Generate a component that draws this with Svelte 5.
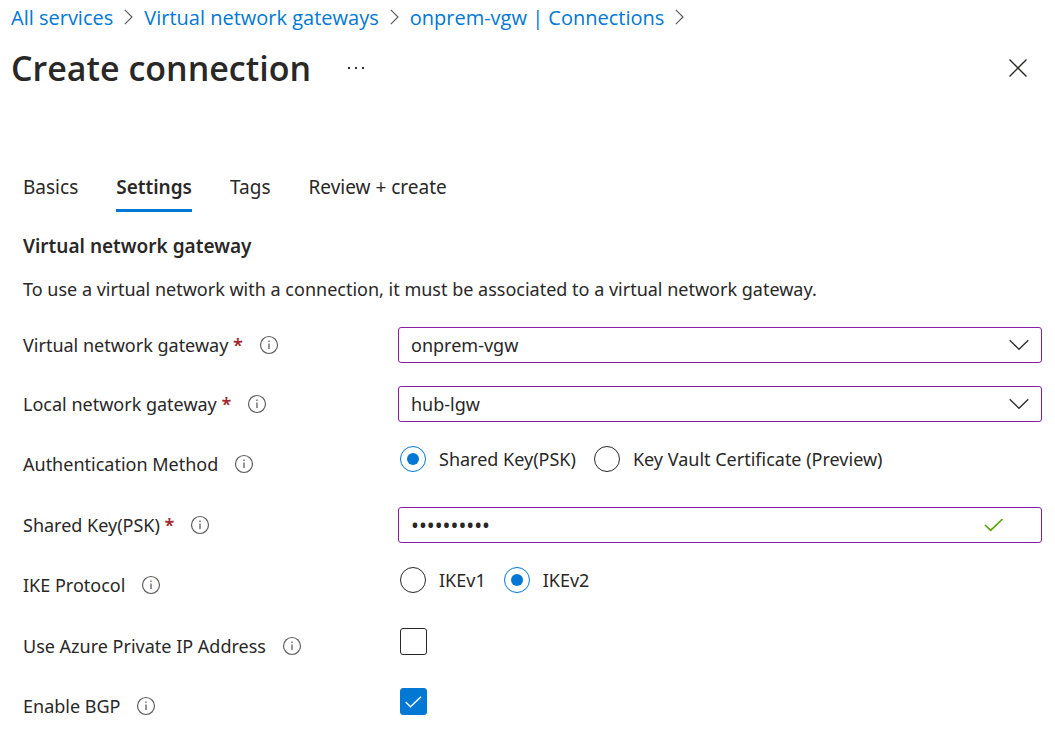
<script>
  const crumbs = ['All services', 'Virtual network gateways', 'onprem-vgw | Connections'];
  const tabs = ['Basics', 'Settings', 'Tags', 'Review + create'];
  let activeTab = $state('Settings');
  let auth = $state('psk');
  let ike = $state('v2');
  let secret = $state('sharedkey1');
  let privateIp = $state(false);
  let bgp = $state(true);
</script>

{#snippet info(topic)}
  <button class="info" type="button" aria-label={'About ' + topic}>
    <svg width="20" height="20" viewBox="0 0 20 20" fill="none" stroke="#605e5c" aria-hidden="true">
      <circle cx="10" cy="10" r="8.5" stroke-width="1.2" />
      <path d="M10 8.5V14M10 5.5V7" stroke-width="1.3" />
    </svg>
  </button>
{/snippet}

{#snippet chevron()}
  <svg class="chevron" width="20" height="12" viewBox="0 0 20 12" fill="none" stroke="#323130" stroke-width="1.4" aria-hidden="true">
    <path d="M0.7 1.2L10 10.3L19.3 1.2" />
  </svg>
{/snippet}

<main>
  <nav class="crumbs" aria-label="Breadcrumb">
    {#each crumbs as crumb}
      <a href="#top">{crumb}</a>
      <svg width="9" height="16" viewBox="0 0 9 16" fill="none" stroke="#605e5c" stroke-width="1.2" aria-hidden="true">
        <path d="M0.8 0.8L8 8L0.8 15.2" />
      </svg>
    {/each}
  </nav>

  <header>
    <h1>Create connection</h1>
    <button class="more" type="button" aria-label="More actions">
      <svg width="18" height="4" viewBox="0 0 18 4" fill="#323130" aria-hidden="true">
        <rect x="1" y="1" width="2" height="2" /><rect x="8" y="1" width="2" height="2" /><rect x="15" y="1" width="2" height="2" />
      </svg>
    </button>
    <button class="close" type="button" aria-label="Close">
      <svg width="18" height="18" viewBox="0 0 18 18" fill="none" stroke="#292827" stroke-width="1.4" aria-hidden="true">
        <path d="M0.5 0.5L17.5 17.5M17.5 0.5L0.5 17.5" />
      </svg>
    </button>
  </header>

  <div class="body">
    <div class="tabs" role="tablist">
      {#each tabs as tab}
        <button type="button" role="tab" aria-selected={activeTab === tab} class:active={activeTab === tab} onclick={() => (activeTab = tab)}>{tab}</button>
      {/each}
    </div>

    <h2>Virtual network gateway</h2>
    <p>To use a virtual network with a connection, it must be associated to a virtual network gateway.</p>

    <form>
      <div class="row">
        <div class="name"><label for="vgw">Virtual network gateway <b>*</b></label>{@render info('virtual network gateway')}</div>
        <div class="field">
          <select id="vgw"><option>onprem-vgw</option></select>
          {@render chevron()}
        </div>
      </div>
      <div class="row">
        <div class="name"><label for="lgw">Local network gateway <b>*</b></label>{@render info('local network gateway')}</div>
        <div class="field">
          <select id="lgw"><option>hub-lgw</option></select>
          {@render chevron()}
        </div>
      </div>
      <div class="row choice">
        <div class="name"><span id="auth">Authentication Method</span>{@render info('authentication method')}</div>
        <div class="options" role="radiogroup" aria-labelledby="auth">
          <label><input type="radio" name="auth" value="psk" bind:group={auth} />Shared Key(PSK)</label>
          <label><input type="radio" name="auth" value="cert" bind:group={auth} />Key Vault Certificate (Preview)</label>
        </div>
      </div>
      <div class="row">
        <div class="name"><label for="psk">Shared Key(PSK) <b>*</b></label>{@render info('shared key')}</div>
        <div class="field">
          <input id="psk" type="password" autocomplete="off" bind:value={secret} />
          <svg class="valid" width="20" height="14" viewBox="0 0 20 14" fill="none" stroke="#57a300" stroke-width="1.6" aria-hidden="true">
            <path d="M1 7L6.7 12.4L18.5 1" />
          </svg>
        </div>
      </div>
      <div class="row choice">
        <div class="name"><span id="ike">IKE Protocol</span>{@render info('IKE protocol')}</div>
        <div class="options" role="radiogroup" aria-labelledby="ike">
          <label><input type="radio" name="ike" value="v1" bind:group={ike} />IKEv1</label>
          <label><input type="radio" name="ike" value="v2" bind:group={ike} />IKEv2</label>
        </div>
      </div>
      <div class="row tick">
        <div class="name"><label for="ip">Use Azure Private IP Address</label>{@render info('private IP address')}</div>
        <div class="box">
          <input id="ip" type="checkbox" bind:checked={privateIp} />
          {#if privateIp}
            <svg width="17" height="12" viewBox="0 0 17 12" fill="none" stroke="#fff" stroke-width="1.4" aria-hidden="true"><path d="M0.7 6L5.5 10.7L16 0.7" /></svg>
          {/if}
        </div>
      </div>
      <div class="row tick">
        <div class="name"><label for="bgp">Enable BGP</label>{@render info('BGP')}</div>
        <div class="box">
          <input id="bgp" type="checkbox" bind:checked={bgp} />
          {#if bgp}
            <svg width="17" height="12" viewBox="0 0 17 12" fill="none" stroke="#fff" stroke-width="1.4" aria-hidden="true"><path d="M0.7 6L5.5 10.7L16 0.7" /></svg>
          {/if}
        </div>
      </div>
    </form>
  </div>
</main>

<style>
  :global(body) {
    margin: 0;
    background: #fff;
  }
  main,
  button,
  input,
  select {
    font-family: 'Noto Sans', 'Open Sans', sans-serif;
    font-size: 18px;
    color: #292827;
  }
  main * {
    box-sizing: border-box;
  }
  button {
    padding: 0;
    border: 0;
    background: none;
    cursor: pointer;
  }
  svg {
    display: block;
    flex: none;
  }
  .crumbs {
    display: flex;
    align-items: center;
    gap: 11px;
    height: 34px;
    padding-left: 11px;
    font-family: 'Open Sans', sans-serif;
    font-size: 20px;
    white-space: nowrap;
  }
  .crumbs a {
    color: #0078d4;
    text-decoration: none;
  }
  header {
    display: flex;
    align-items: center;
    height: 68px;
    padding: 0 28px 0 11px;
  }
  h1 {
    margin: 0;
    font-family: 'Open Sans', sans-serif;
    font-size: 34px;
    font-weight: 600;
    line-height: 48px;
  }
  .more {
    margin-left: 36px;
  }
  .close {
    margin-left: auto;
  }
  .body {
    padding: 66px 13px 0 23px;
  }
  .tabs {
    display: flex;
    gap: 38px;
    height: 44px;
  }
  .tabs button {
    padding-bottom: 4px;
    border-bottom: 3px solid transparent;
    font-size: 19px;
    line-height: 36px;
  }
  .tabs .active {
    border-color: #0078d4;
    font-weight: 600;
  }
  h2 {
    margin: 20px 0 0;
    font-size: 19px;
    font-weight: 600;
    line-height: 28px;
  }
  p {
    margin: 15px 0 24px;
    line-height: 28px;
  }
  form {
    display: flex;
    flex-direction: column;
    gap: 23px;
  }
  .row {
    display: grid;
    grid-template-columns: 375px 1fr;
    align-items: start;
    min-height: 36px;
  }
  .choice {
    min-height: 39px;
  }
  .tick {
    min-height: 37px;
  }
  .name {
    display: flex;
    align-items: center;
    gap: 16px;
    height: 36px;
    white-space: nowrap;
  }
  .choice .name {
    height: 38px;
  }
  b {
    color: #a4262c;
    font-weight: 600;
  }
  .field {
    position: relative;
  }
  .field select,
  .field input {
    display: block;
    width: 100%;
    height: 36px;
    margin: 0;
    padding: 0 12px;
    border: 1px solid #881fa3;
    border-radius: 3px;
    background: #fff;
    appearance: none;
  }
  .field input {
    font-size: 21px;
  }
  .chevron,
  .valid {
    position: absolute;
    top: 12px;
    right: 13px;
    pointer-events: none;
  }
  .valid {
    top: 11px;
    right: 38px;
  }
  .options {
    display: flex;
    gap: 18px;
    padding: 1px 0 0 2px;
  }
  .options label {
    display: flex;
    align-items: center;
    gap: 13px;
    height: 26px;
    white-space: nowrap;
  }
  .options input {
    display: grid;
    place-items: center;
    width: 26px;
    height: 26px;
    margin: 0;
    border: 1px solid #292827;
    border-radius: 50%;
    appearance: none;
  }
  .options input:checked {
    border-color: #0078d4;
  }
  .options input:checked::before {
    content: '';
    width: 12px;
    height: 12px;
    border-radius: 50%;
    background: #0078d4;
  }
  .box {
    display: grid;
    place-items: center;
    width: 27px;
    height: 27px;
    margin-left: 2px;
  }
  .box > * {
    grid-area: 1 / 1;
  }
  .box svg {
    pointer-events: none;
    z-index: 1;
  }
  .box input {
    width: 27px;
    height: 27px;
    margin: 0;
    border: 1px solid #292827;
    border-radius: 3px;
    appearance: none;
  }
  .box input:checked {
    border-color: #0078d4;
    background: #0078d4;
  }
</style>
